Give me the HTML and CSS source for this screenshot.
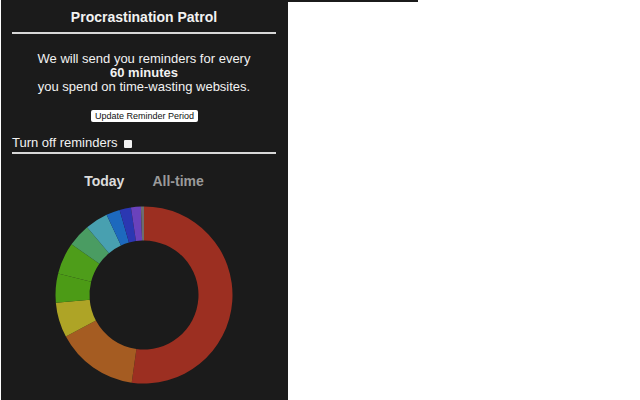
FILE: index.html
```html
<!DOCTYPE html>
<html lang="en">
<head>
    <meta charset="UTF-8">
    <title>Procrastination Patrol</title>
    <link rel="stylesheet" href="styles.css">
</head>
<body>
    <div class="popup">
        <h1 class="title">Procrastination Patrol</h1>
        <p class="info">
            We will send you reminders for every<br>
            <b>60 minutes</b><br>
            you spend on time-wasting websites.
        </p>
        <div class="update">
            <button id="update">Update Reminder Period</button>
        </div>
        <label class="toggle">Turn off reminders <input type="checkbox" id="off"></label>
        <div class="tabs">
            <span class="tab active">Today</span>
            <span class="tab">All-time</span>
        </div>
        <div class="chart">
            <svg id="donut" width="180" height="180" viewBox="0 0 180 180"></svg>
        </div>
    </div>
    <div class="side">
        <div class="strip"></div>
    </div>

    <script src="chart.js"></script>
</body>
</html>
```

FILE: styles.css
```css
* {
    margin: 0;
    padding: 0;
    box-sizing: border-box;
}
html, body {
    height: 100%;
    background: #ffffff;
    font-family: "Liberation Sans", Arial, sans-serif;
}
body {
    display: flex;
    align-items: flex-start;
}
.popup {
    width: 287px;
    height: 400px;
    margin-left: 1px;
    background: #1b1b1b;
    color: #f2f2f2;
    padding: 0 12px 0 11px;
    display: flex;
    flex-direction: column;
}
.title {
    font-size: 14px;
    line-height: 16px;
    font-weight: bold;
    text-align: center;
    padding: 9px 0 7px;
    border-bottom: 2px solid #d8d8d8;
}
.info {
    margin-top: 18px;
    font-size: 13px;
    line-height: 14px;
    text-align: center;
}
.update {
    display: flex;
    justify-content: center;
    margin-top: 16px;
}
#update {
    height: 12px;
    width: 107px;
    padding: 0;
    border: none;
    border-radius: 2px;
    background: #ffffff;
    color: #111;
    font-family: "Liberation Sans", Arial, sans-serif;
    font-size: 9px;
    line-height: 12px;
    margin-left: 1px;
}
.toggle {
    margin-top: 13px;
    font-size: 13px;
    line-height: 15px;
    display: flex;
    align-items: center;
    gap: 6px;
    padding-bottom: 2px;
    border-bottom: 2px solid #d8d8d8;
}
.toggle input {
    appearance: none;
    width: 8px;
    height: 8px;
    background: #f2f2f2;
    border-radius: 1px;
    margin-top: 2px;
}
.tabs {
    margin-top: 19px;
    display: flex;
    justify-content: center;
    gap: 28px;
    font-size: 14px;
    line-height: 16px;
    font-weight: bold;
}
.tab {
    color: #9a9a9a;
}
.tab.active {
    color: #dcdcdc;
}
.chart {
    margin-top: 16px;
    display: flex;
    justify-content: center;
}
.side {
    flex: 0 0 130px;
}
.strip {
    height: 2px;
    background: #1b1b1b;
}
```

FILE: chart.js
```js
// segments in degrees, starting from the top and going clockwise
const slices = [
    { deg: 188, color: "#9c2f21" },
    { deg: 54, color: "#a55c22" },
    { deg: 23, color: "#aea426" },
    { deg: 19, color: "#4c9b16" },
    { deg: 21, color: "#4e9d1a" },
    { deg: 15, color: "#4a9c62" },
    { deg: 15, color: "#48a0b0" },
    { deg: 9, color: "#1d69be" },
    { deg: 7.5, color: "#2b37b2" },
    { deg: 6.5, color: "#6a42bc" },
    { deg: 2, color: "#6e6e6e" }
];

const svg = document.getElementById("donut");
const cx = 90, cy = 90, outer = 88.5, inner = 54.5;

function point(r, a) {
    const rad = a * Math.PI / 180;
    return [cx + r * Math.sin(rad), cy - r * Math.cos(rad)];
}

let start = 0;
slices.forEach(s => {
    const end = start + s.deg;
    const big = s.deg > 180 ? 1 : 0;
    const [x1, y1] = point(outer, start);
    const [x2, y2] = point(outer, end);
    const [x3, y3] = point(inner, end);
    const [x4, y4] = point(inner, start);
    const d = `M${x1} ${y1} A${outer} ${outer} 0 ${big} 1 ${x2} ${y2} L${x3} ${y3} A${inner} ${inner} 0 ${big} 0 ${x4} ${y4} Z`;
    const path = document.createElementNS("http://www.w3.org/2000/svg", "path");
    path.setAttribute("d", d);
    path.setAttribute("fill", s.color);
    svg.appendChild(path);
    start = end;
});
```
